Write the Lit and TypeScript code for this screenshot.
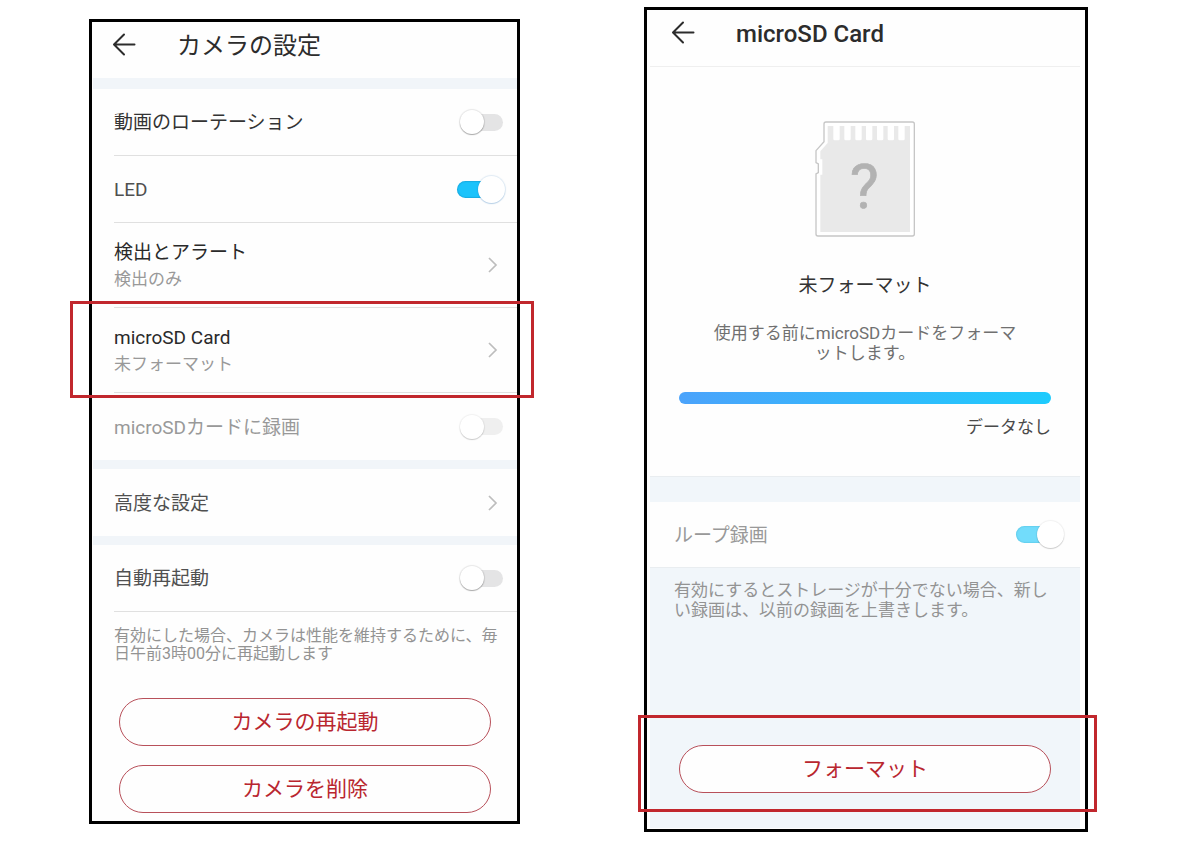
import { LitElement, html, css, svg, nothing } from "lit";
import { customElement, property } from "lit/decorators.js";

const base = css`
  *,
  *::before,
  *::after {
    box-sizing: border-box;
  }
  :host {
    display: block;
  }
`;

@customElement("toggle-switch")
class ToggleSwitch extends LitElement {
  @property() name = "";
  @property() label = "";
  @property({ type: Boolean }) on = false;
  @property({ type: Boolean }) disabled = false;

  static styles = [
    base,
    css`
      .switch {
        display: flex;
        align-items: center;
        justify-content: space-between;
        gap: 16px;
      }
      .label {
        padding-top: 2px;
      }
      .box {
        appearance: none;
        flex: none;
        display: grid;
        align-items: center;
        width: 48px;
        height: 28px;
        margin: 0;
        padding: 0 2px 0 3px;
      }
      .box::before,
      .box::after {
        content: "";
        grid-area: 1 / 1;
      }
      .box::before {
        height: 17px;
        margin-left: 4px;
        border-radius: 9px;
        background: #e4e4e5;
      }
      .box::after {
        width: 24px;
        height: 24px;
        border-radius: 50%;
        background: #fff;
        box-shadow: 0 1px 1px rgba(0, 0, 0, 0.28), 0 0 1px 1px rgba(0, 0, 0, 0.09);
      }
      .box:checked {
        padding: 0;
      }
      .box:checked::before {
        margin: 0 4px 0 0;
        background: #1cc3fb;
        box-shadow: inset 0 0 1px 1px rgba(20, 130, 180, 0.35);
      }
      .box:checked::after {
        justify-self: end;
        width: 27px;
        height: 27px;
        box-shadow: 0 1px 1px rgba(60, 130, 190, 0.25), 0 0 1px 1px rgba(60, 130, 190, 0.15);
      }
      .box:disabled::before {
        background: #efefef;
      }
      .box:disabled::after {
        box-shadow: 0 1px 1px rgba(0, 0, 0, 0.16), 0 0 1px 1px rgba(0, 0, 0, 0.05);
      }
      .box:checked:disabled::before {
        background: #72dcfb;
        box-shadow: inset 0 0 1px 1px rgba(60, 170, 200, 0.25);
      }
    `,
  ];

  render() {
    return html`<div class="switch">
      <label class="label" for="box">${this.label}</label>
      <input id="box" class="box" type="checkbox" role="switch" .checked=${this.on} ?disabled=${this.disabled} />
    </div>`;
  }
}

@customElement("screen-header")
class ScreenHeader extends LitElement {
  @property() heading = "";

  static styles = [
    base,
    css`
      .bar {
        display: flex;
        align-items: center;
        gap: 41px;
        height: 46px;
      }
      .back {
        display: block;
        padding: 0;
        border: 0;
        background: none;
        color: #2c2c2c;
      }
      .arrow {
        display: block;
        width: 24px;
        height: 24px;
        fill: none;
        stroke: currentColor;
        stroke-width: 2;
        stroke-linecap: round;
        stroke-linejoin: round;
      }
      .title {
        margin: 0;
        padding-top: 2px;
        font-size: 24px;
        line-height: 32px;
        font-weight: inherit;
        color: #2c2c2c;
      }
    `,
  ];

  render() {
    return html`<header class="bar">
      <button class="back" type="button" aria-label="戻る">
        <svg class="arrow" viewBox="0 0 24 24"><path d="M22.500 11.500H2.500M12 1.500 2 11.500l10 10" /></svg>
      </button>
      <h1 class="title">${this.heading}</h1>
    </header>`;
  }
}

@customElement("link-row")
class LinkRow extends LitElement {
  @property() label = "";
  @property() detail = "";

  static styles = [
    base,
    css`
      .link {
        display: flex;
        align-items: center;
        justify-content: space-between;
        color: inherit;
        text-decoration: none;
      }
      .text {
        display: grid;
        padding-top: 2px;
        line-height: 26px;
      }
      .detail {
        font-size: 17px;
        color: #999;
      }
      .chevron {
        width: 10px;
        height: 16px;
        fill: none;
        stroke: #bdbdbd;
        stroke-width: 1.700;
      }
    `,
  ];

  render() {
    return html`<a class="link" href="#">
      <span class="text">
        <span>${this.label}</span>
        ${this.detail ? html`<span class="detail">${this.detail}</span>` : nothing}
      </span>
      <svg class="chevron" viewBox="0 0 10 16"><path d="M1 1l7 7-7 7" /></svg>
    </a>`;
  }
}

const slots = [162, 195, 228, 260, 293, 325, 357];

@customElement("app-root")
class AppRoot extends LitElement {
  static styles = [
    base,
    css`
      :host {
        font-family: Roboto, "Noto Sans CJK JP", sans-serif;
        font-size: 19px;
        line-height: 26px;
        color: #333;
        background: #fff;
      }
      .page {
        display: grid;
        grid-template-columns: minmax(0, 431fr) minmax(0, 444fr);
        column-gap: 124px;
        align-items: start;
        padding: 7px 112px 15px 89px;
      }
      .phone {
        border: 3px solid #000;
        background: #fefefe;
      }
      .settings {
        margin-top: 12px;
        padding-bottom: 8px;
      }
      .settings-head {
        height: 56px;
        padding-left: 20px;
      }
      .band {
        height: 9px;
        margin-left: 1px;
        background: #f1f5f9;
      }
      .band-top {
        height: 11px;
      }
      .row {
        position: relative;
        display: grid;
        align-items: center;
        min-height: 67px;
        margin-left: 22px;
        padding-right: 12px;
      }
      .line {
        border-bottom: 1px solid #e0e0e0;
      }
      .tall {
        min-height: 85px;
      }
      .go {
        padding-right: 19px;
      }
      .strong {
        color: #2a2a2a;
      }
      .soft {
        color: #505050;
      }
      .off {
        color: #999;
      }
      .note {
        margin: 0;
        line-break: anywhere;
        color: #939393;
      }
      .settings-note {
        padding: 15px 18px 0 22px;
        font-size: 16px;
        line-height: 18px;
      }
      .actions {
        display: grid;
        gap: 19px;
        padding: 35px 26px 0 27px;
      }
      .pill {
        width: 100%;
        height: 48px;
        padding: 0;
        border: 1px solid #b8505a;
        border-radius: 24px;
        background: #fefefe;
        font: inherit;
        font-size: 21px;
        color: #b9262f;
      }
      .mark {
        position: absolute;
        border: 3px solid #c1272d;
        pointer-events: none;
      }
      .mark-row {
        inset: -7px -17px -6px -44px;
      }
      .mark-format {
        inset: -30px -46px -19px -41px;
      }
      .card {
        padding: 0 5px 1px 3px;
      }
      .card-head {
        height: 57px;
        padding-left: 21px;
        border-bottom: 1px solid #efefef;
        font-weight: 500;
      }
      .status {
        display: grid;
        justify-items: center;
        padding: 54px 29px 36px;
      }
      .sd {
        display: block;
        width: 100px;
        height: 116px;
      }
      .q {
        font-family: Roboto, sans-serif;
        font-size: 184px;
        fill: #b2b2b2;
        stroke: #b2b2b2;
        stroke-width: 2px;
      }
      .state {
        margin: 36px 0 0;
        font-size: 19px;
        line-height: 26px;
        font-weight: 400;
      }
      .hint {
        max-width: 312px;
        margin: 24px 0 0;
        font-size: 17px;
        line-height: 20px;
        line-break: anywhere;
        text-align: center;
        color: #707070;
      }
      .meter {
        width: 100%;
        height: 12px;
        margin-top: 29px;
        border-radius: 6px;
        background: linear-gradient(90deg, #4ba3fb, #1ecbfd);
      }
      .amount {
        justify-self: end;
        margin-top: 10px;
        font-size: 17px;
        color: #4a4a4a;
      }
      .panel {
        background: #f1f6fa;
        border-top: 1px solid #e9edf0;
        padding-top: 25px;
      }
      .loop {
        padding: 0 16px 0 24px;
        display: grid;
        align-items: center;
        min-height: 66px;
        background: #fefefe;
        border-bottom: 1px solid #e9edf0;
      }
      .card-note {
        padding: 12px 30px 0 24px;
        font-size: 17px;
        line-height: 20px;
      }
      .format {
        position: relative;
        margin: 125px 29px 0;
      }
      .foot {
        height: 35px;
      }
    `,
  ];

  private sdCard() {
    return html`<svg class="sd" viewBox="107 63 300 348" role="img" aria-label="microSD">
      <path
        d="M140 66H399Q405 66 405 72V402Q405 408 399 408H116Q110 408 110 402V222L117 218V192L110 188V152L134 125V72Q134 66 140 66Z"
        fill="#fff"
        stroke="#c6c6c6"
        stroke-width="4"
      />
      <path d="M145 78H392V396H123V224H129V178H123V154L145 129Z" fill="#e9e9e9" />
      ${slots.map((x) => svg`<path d="M${x} 76h19v41q0 4-4 4h-11q-4 0-4-4z" fill="#fff" />`)}
      <text class="q" x="255" y="325" text-anchor="middle">?</text>
    </svg>`;
  }

  render() {
    return html`<main class="page">
      <section class="phone settings">
        <screen-header class="settings-head" heading="カメラの設定"></screen-header>
        <div class="band band-top"></div>
        <div class="row line"><toggle-switch label="動画のローテーション"></toggle-switch></div>
        <div class="row line soft"><toggle-switch label="LED" on></toggle-switch></div>
        <div class="row line tall go strong"><link-row label="検出とアラート" detail="検出のみ"></link-row></div>
        <div class="row line tall go strong">
          <link-row label="microSD Card" detail="未フォーマット"></link-row>
          <div class="mark mark-row"></div>
        </div>
        <div class="row off"><toggle-switch label="microSDカードに録画" disabled></toggle-switch></div>
        <div class="band"></div>
        <div class="row go soft"><link-row label="高度な設定"></link-row></div>
        <div class="band"></div>
        <div class="row line soft"><toggle-switch label="自動再起動"></toggle-switch></div>
        <p class="note settings-note">有効にした場合、カメラは性能を維持するために、毎日午前3時00分に再起動します</p>
        <div class="actions">
          <button class="pill" type="button">カメラの再起動</button>
          <button class="pill" type="button">カメラを削除</button>
        </div>
      </section>

      <section class="phone card">
        <screen-header class="card-head" heading="microSD Card"></screen-header>
        <div class="status">
          ${this.sdCard()}
          <h2 class="state">未フォーマット</h2>
          <p class="hint">使用する前にmicroSDカードをフォーマットします。</p>
          <div class="meter"></div>
          <span class="amount">データなし</span>
        </div>
        <div class="panel">
          <div class="loop off"><toggle-switch label="ループ録画" on disabled></toggle-switch></div>
          <p class="note card-note">有効にするとストレージが十分でない場合、新しい録画は、以前の録画を上書きします。</p>
          <div class="format">
            <button class="pill" type="button">フォーマット</button>
            <div class="mark mark-format"></div>
          </div>
          <div class="foot"></div>
        </div>
      </section>
    </main>`;
  }
}
